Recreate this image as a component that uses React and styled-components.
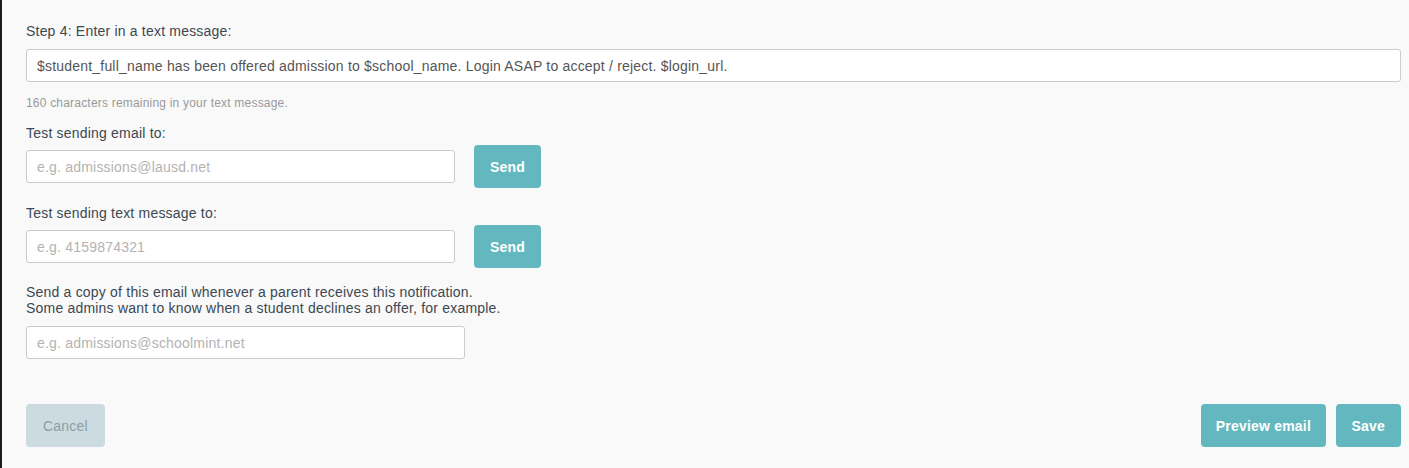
import React from "react";
import styled, { createGlobalStyle } from "styled-components";

const Global = createGlobalStyle`
  html, body { margin: 0; padding: 0; background: #f9f9f9; }
  body { font-family: "Helvetica Neue", "Liberation Sans", Arial, sans-serif; }
  * { box-sizing: border-box; }
`;

const Frame = styled.div`
  display: flex;
  width: 1409px;
  height: 468px;
  background: #f9f9f9;
`;

const Edge = styled.div`
  width: 2px;
  flex: none;
  background: #1c1c1e;
`;

const Panel = styled.div`
  flex: 1;
  padding: 21px 8px 0 24px;
  display: flex;
  flex-direction: column;
  letter-spacing: 0.2px;
`;

const Label = styled.div`
  font-size: 14px;
  line-height: 20px;
  color: #3c4852;
  margin-bottom: ${(p) => p.$mb ?? 2}px;
`;

const Hint = styled.div`
  font-size: 12px;
  line-height: 17px;
  color: #999;
  margin: 13px 0 11px;
`;

const Input = styled.input`
  display: block;
  width: ${(p) => p.$w || "100%"};
  height: 33px;
  padding: 0 10px;
  border: 1px solid #cccccc;
  border-radius: 3px;
  background: #fff;
  font-family: inherit;
  font-size: 14px;
  letter-spacing: 0.2px;
  color: #555;
  outline: none;
  &::placeholder { color: #b3b3b3; }
`;

const Row = styled.div`
  display: flex;
  align-items: center;
  gap: 19px;
  margin-bottom: ${(p) => p.$mb ?? 15}px;
`;

const Button = styled.button`
  height: 43px;
  padding: 0 ${(p) => p.$px ?? 16}px;
  border: none;
  border-radius: 4px;
  background: ${(p) => (p.$muted ? "#ccdbe0" : "#62b8be")};
  color: ${(p) => (p.$muted ? "#8b9ea5" : "#ffffff")};
  font-family: inherit;
  font-size: 14px;
  letter-spacing: 0.2px;
  font-weight: ${(p) => (p.$muted ? 400 : 700)};
  cursor: pointer;
`;

const Footer = styled.div`
  display: flex;
  justify-content: space-between;
  align-items: center;
  margin-top: 45px;
`;

const Group = styled.div`
  display: flex;
  gap: 10px;
`;

const Para = styled.div`
  font-size: 14px;
  line-height: 16px;
  color: #3c4852;
  margin-bottom: 10px;
`;

export default function App() {
  return (
    <>
      <Global />
      <Frame>
        <Edge />
        <Panel>
          <Label $mb={8}>Step 4: Enter in a text message:</Label>
          <Input
            readOnly
            value="$student_full_name has been offered admission to $school_name. Login ASAP to accept / reject. $login_url."
          />
          <Hint>160 characters remaining in your text message.</Hint>
          <Label>Test sending email to:</Label>
          <Row>
            <Input $w="429px" placeholder="e.g. admissions@lausd.net" />
            <Button>Send</Button>
          </Row>
          <Label>Test sending text message to:</Label>
          <Row $mb={16}>
            <Input $w="429px" placeholder="e.g. 4159874321" />
            <Button>Send</Button>
          </Row>
          <Para>
            Send a copy of this email whenever a parent receives this notification.
            <br />
            Some admins want to know when a student declines an offer, for example.
          </Para>
          <Input $w="439px" placeholder="e.g. admissions@schoolmint.net" />
          <Footer>
            <Button $muted $px={17}>Cancel</Button>
            <Group>
              <Button $px={14.5}>Preview email</Button>
              <Button>Save</Button>
            </Group>
          </Footer>
        </Panel>
      </Frame>
    </>
  );
}
